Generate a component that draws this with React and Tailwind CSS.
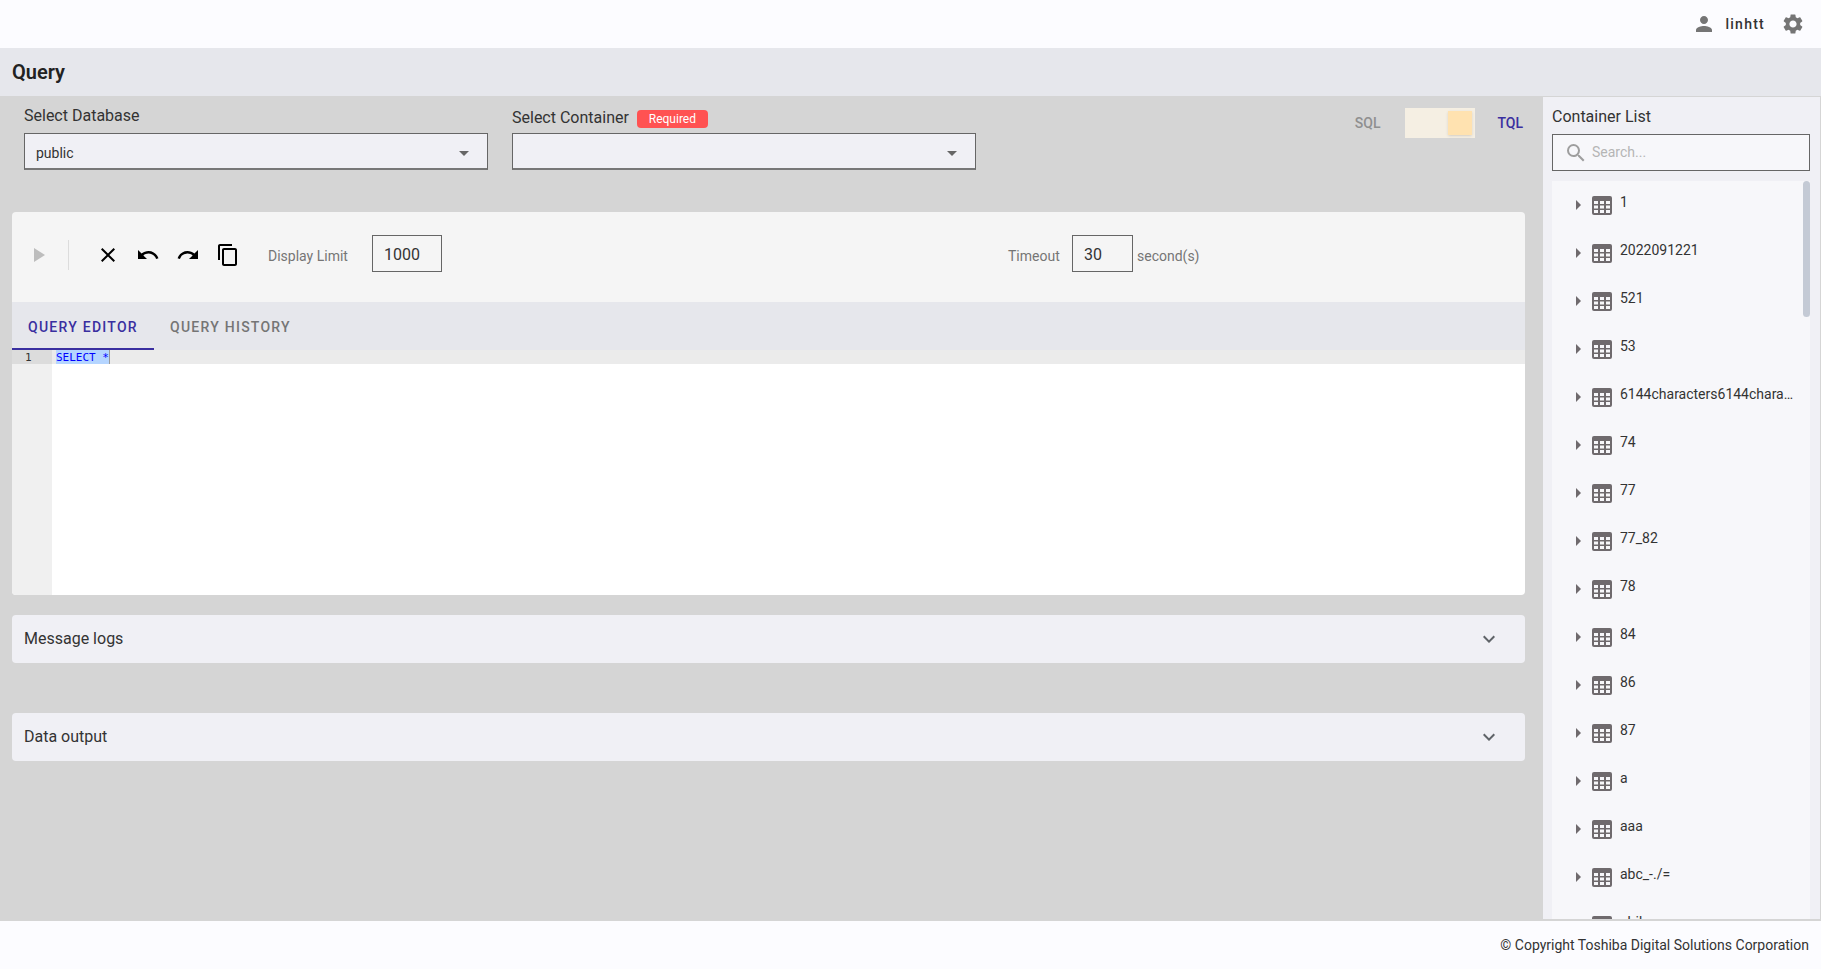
import {
  MdPerson,
  MdSettings,
  MdClose,
  MdUndo,
  MdRedo,
  MdContentCopy,
  MdPlayArrow,
  MdArrowDropDown,
  MdArrowRight,
  MdExpandMore,
  MdSearch,
} from "react-icons/md";

const containers = [
  "1",
  "2022091221",
  "521",
  "53",
  "6144characters6144characters6144characters",
  "74",
  "77",
  "77_82",
  "78",
  "84",
  "86",
  "87",
  "a",
  "aaa",
  "abc_-./=",
  "abiba",
];

const TableIcon = () => (
  <svg width="20" height="19" viewBox="0 0 20 19" className="shrink-0 ml-[2px] mt-[1px]">
    <rect width="20" height="19" rx="2" fill="#6f6a6d" />
    <rect x="2" y="5" width="4" height="3" fill="#f7f7fa" />
    <rect x="8" y="5" width="4" height="3" fill="#f7f7fa" />
    <rect x="14" y="5" width="4" height="3" fill="#f7f7fa" />
    <rect x="2" y="9.5" width="4" height="3" fill="#f7f7fa" />
    <rect x="8" y="9.5" width="4" height="3" fill="#f7f7fa" />
    <rect x="14" y="9.5" width="4" height="3" fill="#f7f7fa" />
    <rect x="2" y="14" width="4" height="3" fill="#f7f7fa" />
    <rect x="8" y="14" width="4" height="3" fill="#f7f7fa" />
    <rect x="14" y="14" width="4" height="3" fill="#f7f7fa" />
  </svg>
);

const Select = ({ value }) => (
  <div className="w-[464px] h-[37px] border border-[#666] border-b-2 border-b-[#777] bg-[#f0f0f5] flex items-center justify-between pt-[4px] pl-[11px] pr-[11px] text-[14px] text-[#333]">
    <span>{value}</span>
    <MdArrowDropDown className="text-[24px] text-[#666]" />
  </div>
);

const Accordion = ({ title, className }) => (
  <div className={`h-[48px] rounded bg-[#f0f0f5] flex items-center justify-between pl-[12px] pr-[24px] text-[16px] text-[#333] ${className}`}>
    <span>{title}</span>
    <MdExpandMore className="text-[24px] text-[#5f6368]" />
  </div>
);

const App = () => {
  return (
    <div className="h-[969px] w-full flex flex-col overflow-hidden bg-[#d5d5d5] font-['Roboto',sans-serif]">
      <header className="h-[48px] shrink-0 bg-[#fcfcff] flex items-center justify-end pr-[16px]">
        <MdPerson className="text-[24px] text-[#757575]" />
        <span className="ml-[9px] text-[14px] font-medium tracking-[1.25px] text-[#333]">linhtt</span>
        <MdSettings className="ml-[16px] text-[24px] text-[#757575]" />
      </header>

      <div className="h-[48px] shrink-0 bg-[#e6e7ec] flex items-center pl-[12px] text-[20px] font-semibold text-[#222]">
        Query
      </div>

      <div className="flex-1 flex min-h-0">
        <main className="flex-1 min-w-0 pl-[12px] pr-[17px]">
          <div className="h-[116px] flex">
            <div className="ml-[12px] mr-[24px]">
              <div className="h-[37px] pt-[2px] flex items-center text-[16px] text-[#333]">Select Database</div>
              <Select value="public" />
            </div>
            <div>
              <div className="h-[37px] pt-[6px] flex items-center gap-[8px] text-[16px] text-[#333]">
                Select Container
                <span className="h-[18px] w-[71px] mt-[2px] rounded bg-[#ff5252] text-white text-[12px] flex items-center justify-center">Required</span>
              </div>
              <Select value="" />
            </div>
            <div className="ml-auto h-[30px] mt-[12px] flex items-center">
              <span className="text-[14px] font-medium text-[#8f8f8f]">SQL</span>
              <div className="ml-[25px] w-[70px] h-[30px] bg-[#f5efe3] flex items-center justify-end pr-[3px]">
                <div className="w-[24px] h-[24px] bg-[#ffe2b0] shadow" />
              </div>
              <span className="ml-[22px] mr-[2px] text-[14px] font-medium text-[#3a2fa0]">TQL</span>
            </div>
          </div>

          <section className="rounded overflow-hidden">
            <div className="h-[90px] bg-[#f5f5f5] flex items-center pl-[17px] pb-[7px]">
              <MdPlayArrow className="text-[24px] text-[#bdbdbd] -ml-[3px] mt-[2px]" />
              <div className="ml-[18px] w-px h-[30px] mt-[2px] bg-[#dcdcdc]" />
              <MdClose className="ml-[27px] mt-[2px] text-[24px] text-black" />
              <MdUndo className="ml-[16px] mt-[2px] text-[24px] text-black" />
              <MdRedo className="ml-[16px] mt-[2px] text-[24px] text-black" />
              <MdContentCopy className="ml-[16px] mt-[2px] text-[24px] text-black" />
              <span className="ml-[28px] mt-[5px] text-[14px] text-[#757575] w-[80px]">Display Limit</span>
              <div className="ml-[24px] w-[70px] h-[37px] border border-[#666] flex items-center pl-[11px] pt-[2px] text-[16px] text-[#333]">1000</div>
              <span className="ml-[566px] mt-[5px] text-[14px] text-[#757575] w-[52px]">Timeout</span>
              <div className="ml-[12px] w-[61px] h-[37px] border border-[#666] flex items-center pl-[11px] pt-[2px] text-[16px] text-[#333]">30</div>
              <span className="ml-[4px] mt-[5px] text-[14px] text-[#757575]">second(s)</span>
            </div>

            <div className="h-[48px] bg-[#e6e7ec] flex items-stretch text-[14px] font-medium tracking-[1.25px]">
              <div className="w-[142px] pl-[16px] pt-[5px] flex items-center text-[#3a2fa0] border-b-2 border-[#3a2fa0]">QUERY EDITOR</div>
              <div className="pl-[16px] pt-[3px] flex items-center text-[#757575]">QUERY HISTORY</div>
            </div>

            <div className="h-[245px] bg-white flex font-['DejaVu_Sans_Mono',monospace] text-[11px]">
              <div className="w-[40px] shrink-0 bg-[#f0f0f0]">
                <div className="h-[14px] bg-[#dcdcdc] text-[#333] leading-[16px] pl-[13px]">1</div>
              </div>
              <div className="flex-1">
                <div className="h-[14px] bg-[#ebebeb] leading-[16px] pl-[4px] flex">
                  <span className="bg-[#b5d5ff] text-[#0000ff] h-[14px]">SELECT *</span>
                  <span className="w-px bg-[#9a9a9a]" />
                </div>
              </div>
            </div>
          </section>

          <Accordion title="Message logs" className="mt-[20px]" />
          <Accordion title="Data output" className="mt-[50px]" />
        </main>

        <aside className="w-[279px] shrink-0 bg-[#f0f0f5] border border-[#d5d5d5] pl-[9px] pr-[10px] flex flex-col min-h-0">
          <div className="h-[37px] pt-[2px] flex items-center text-[16px] text-[#333]">Container List</div>
          <div className="h-[37px] border border-[#666] bg-[#f7f7fa] flex items-center pl-[11px] text-[14px] text-[#b5b5b5]">
            <MdSearch className="text-[24px] text-[#9e9e9e] mr-[4px]" />
            Search...
          </div>
          <div className="relative mt-[10px] flex-1 min-h-0 overflow-hidden bg-[#f7f7fa]">
            {containers.map((name) => (
              <div key={name} className="h-[48px] flex pt-[14px] pl-[14px] pr-[12px]">
                <MdArrowRight className="text-[24px] text-[#6f6a6d] -mt-[2px] shrink-0" />
                <TableIcon />
                <span className="ml-[8px] -mt-[3px] text-[14px] leading-[20px] text-[#333] truncate">{name}</span>
              </div>
            ))}
            <div className="absolute top-0 right-0 w-[7px] h-[136px] rounded bg-[#c4cad5]" />
          </div>
        </aside>
      </div>

      <footer className="h-[49px] shrink-0 bg-[#fcfcff] border-t border-[#d5d5d5] flex items-center justify-end pr-[12px] text-[14px] text-[#333]">
        © Copyright Toshiba Digital Solutions Corporation
      </footer>
    </div>
  );
};

export default App;
